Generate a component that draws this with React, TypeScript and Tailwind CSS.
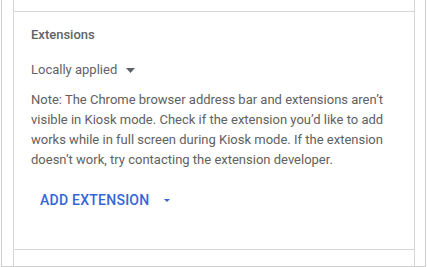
export default function App() {
  return (
    <div className="w-[427px] h-[267px] bg-white overflow-hidden" style={{ fontFamily: 'Roboto, "Liberation Sans", sans-serif' }}>
      <div className="ml-px w-[425px] h-[267px] border-x border-b border-[#cfcfcf] pl-[11px]">
        <div className="w-[402px] h-full flex flex-col border-x border-[#d6d6d6]">
          <div className="h-[11px] shrink-0" />
          <div className="h-[239px] border-y border-[#d6d6d6] pl-[17px] pr-[16px] pt-[13px]">
            <h2 className="text-[13px] leading-5 font-medium text-[#5f6368]">Extensions</h2>

            {/* Dropdown */}
            <div className="mt-[15px] flex items-center text-[13px] leading-5 text-[#5f6368]">
              <span>Locally applied</span>
              <svg className="ml-[9px]" width="9" height="5" viewBox="0 0 9 5">
                <path d="M0 0 L9 0 L4.5 5 Z" fill="#5f6368" />
              </svg>
            </div>

            <p className="mt-[10px] text-[13px] leading-5 text-[#616161] w-[368px]">
              Note: The Chrome browser address bar and extensions aren’t visible in Kiosk mode. Check if the extension you’d like to add works while in full screen during Kiosk mode. If the extension doesn’t work, try contacting the extension developer.
            </p>

            <button className="mt-[20px] ml-[9px] flex items-center text-[14px] leading-5 font-medium text-[#3367d6] tracking-[0.25px]">
              <span>ADD EXTENSION</span>
              <svg className="ml-[15px]" width="6" height="3" viewBox="0 0 6 3">
                <path d="M0 0 L6 0 L3 3 Z" fill="#3367d6" />
              </svg>
            </button>
          </div>
        </div>
      </div>
    </div>
  );
}
